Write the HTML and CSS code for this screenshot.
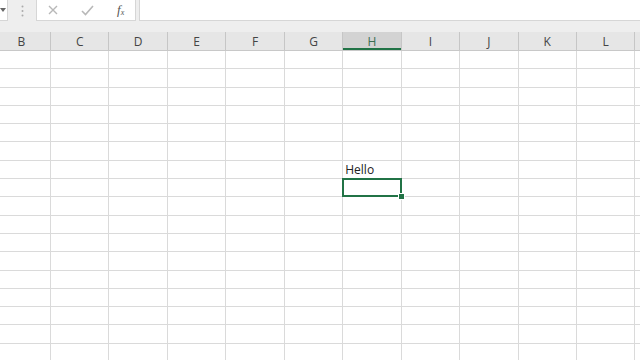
FILE: index.html
```html
<!DOCTYPE html>
<html>
<head>
<meta charset="utf-8">
<link rel="stylesheet" href="styles.css">
</head>
<body>
<div class="fbar">
  <div class="namebox"><svg width="6" height="4" viewBox="0 0 6 4"><path d="M0 0 L6 0 L3 4 Z" fill="#666"/></svg></div>
  <div class="grip"><svg width="3" height="12" viewBox="0 0 3 12"><circle cx="1.5" cy="1.5" r="1" fill="#aaa"/><circle cx="1.5" cy="6" r="1" fill="#aaa"/><circle cx="1.5" cy="10.5" r="1" fill="#aaa"/></svg></div>
  <div class="fxbox">
    <svg class="ic-x" width="10" height="10" viewBox="0 0 10 10"><path d="M1 1 L9 9 M9 1 L1 9" stroke="#b8b8b8" stroke-width="1.4"/></svg>
    <svg class="ic-ok" width="13" height="11" viewBox="0 0 13 11"><path d="M1 6 L4.5 9.5 L12 1" stroke="#b8b8b8" stroke-width="1.6" fill="none"/></svg>
    <span class="fx">f<sub>x</sub></span>
  </div>
  <div class="formula"></div>
</div>
<div class="strip"></div>
<div class="sheet">
  <div class="hdr">
    <div class="hc">B</div><div class="hc">C</div><div class="hc">D</div><div class="hc">E</div><div class="hc">F</div><div class="hc">G</div><div class="hc sel">H</div><div class="hc">I</div><div class="hc">J</div><div class="hc">K</div><div class="hc">L</div><div class="hc"></div>
  </div>
  <div class="grid" id="grid"></div>
</div>
<script src="app.js"></script>
</body>
</html>
```
FILE: app.js
```js
var g = document.getElementById('grid');
var html = '';
for (var r = 0; r < 17; r++) {
  for (var c = 0; c < 12; c++) {
    var cls = 'cell';
    var txt = '';
    if (c === 6 && r === 6) { txt = 'Hello'; }
    if (c === 6 && r === 7) { cls += ' active'; }
    html += '<div class="' + cls + '">' + txt + '</div>';
  }
}
g.innerHTML = html;
```
FILE: styles.css
```css
html, body {
  margin: 0;
  padding: 0;
  background: #ffffff;
  overflow: hidden;
  font-family: "Open Sans", "Liberation Sans", sans-serif;
}
.fbar {
  height: 22px;
  display: flex;
  background: #eeeeee;
}
.namebox {
  width: 8px;
  height: 21px;
  background: #ffffff;
  border-right: 1px solid #d6d6d6;
  border-bottom: 1px solid #d6d6d6;
  display: flex;
  align-items: center;
  box-sizing: border-box;
}
.grip {
  width: 28px;
  display: flex;
  align-items: center;
  justify-content: center;
}
.fxbox {
  width: 100px;
  height: 21px;
  background: #ffffff;
  border: 1px solid #d6d6d6;
  border-top: none;
  box-sizing: border-box;
  display: flex;
  align-items: center;
}
.ic-x { margin-left: 11px; }
.ic-ok { margin-left: 23px; }
.fx {
  margin-left: 23px;
  font-family: "Liberation Serif", serif;
  font-style: italic;
  font-size: 13px;
  color: #555555;
  line-height: 1;
}
.fx sub { font-size: 8px; vertical-align: -1px; }
.formula {
  margin-left: 3px;
  flex: 1;
  height: 21px;
  background: #ffffff;
  border-left: 1px solid #d6d6d6;
  border-bottom: 1px solid #d6d6d6;
  box-sizing: border-box;
}
.strip {
  height: 10px;
  background: #eeeeee;
}
.sheet {
  margin-left: -7.4px;
}
.hdr {
  display: grid;
  grid-template-columns: repeat(12, 58.45px);
  height: 18px;
  background: #e6e6e6;
  border-bottom: 1px solid #c8c8c8;
}
.hc {
  border-right: 1px solid #c6c6c6;
  font-size: 12px;
  color: #444444;
  display: flex;
  align-items: center;
  justify-content: center;
  padding-top: 1px;
}
.hc.sel {
  background: #d3d3d3;
  color: #3b6e52;
  box-shadow: inset 0 -2px 0 #217346;
}
.grid {
  display: grid;
  grid-template-columns: repeat(12, 58.45px);
  grid-auto-rows: 18.3px;
}
.cell {
  border-right: 1px solid #dadada;
  border-bottom: 1px solid #dadada;
  font-size: 12px;
  color: #222222;
  display: flex;
  align-items: flex-end;
  padding-left: 2px;
  line-height: 16px;
  position: relative;
}
.cell.active::after {
  content: "";
  position: absolute;
  left: -1px;
  top: -1px;
  right: -1px;
  bottom: -1px;
  border: 2px solid #217346;
}
.cell.active::before {
  content: "";
  position: absolute;
  right: -4px;
  bottom: -4px;
  width: 5px;
  height: 5px;
  background: #217346;
  border: 1px solid #ffffff;
  z-index: 2;
}
```
